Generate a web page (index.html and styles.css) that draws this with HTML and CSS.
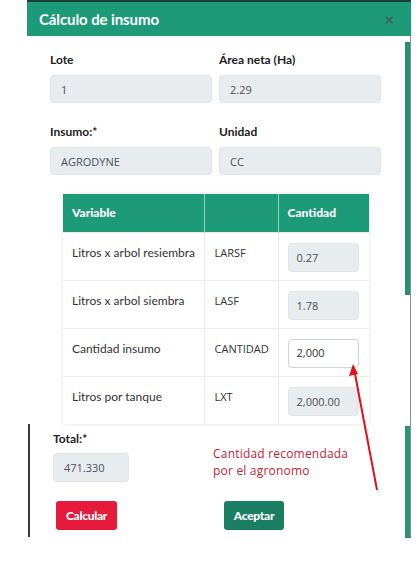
FILE: index.html
```html
<!DOCTYPE html>
<html lang="es">
<head>
<meta charset="utf-8">
<title>Cálculo de insumo</title>
<link rel="stylesheet" href="styles.css">
</head>
<body>
<div class="screen">
  <div class="frame">
    <div class="header">
      <span class="title">Cálculo de insumo</span>
      <span class="close">×</span>
    </div>
    <div class="content">
      <div class="main">
        <div class="form">
          <div class="grid2">
            <div class="field">
              <div class="label">Lote</div>
              <div class="input ro">1</div>
            </div>
            <div class="field">
              <div class="label">Área neta (Ha)</div>
              <div class="input ro">2.29</div>
            </div>
            <div class="field">
              <div class="label">Insumo:*</div>
              <div class="input ro">AGRODYNE</div>
            </div>
            <div class="field">
              <div class="label">Unidad</div>
              <div class="input ro">CC</div>
            </div>
          </div>
          <div class="table-wrap">
            <table class="vars">
              <thead>
                <tr><th class="c1">Variable</th><th class="c2"></th><th class="c3">Cantidad</th></tr>
              </thead>
              <tbody>
                <tr><td class="c1">Litros x arbol resiembra</td><td class="c2">LARSF</td><td class="c3"><div class="cell-input ro">0.27</div></td></tr>
                <tr><td class="c1">Litros x arbol siembra</td><td class="c2">LASF</td><td class="c3"><div class="cell-input ro">1.78</div></td></tr>
                <tr><td class="c1">Cantidad insumo</td><td class="c2">CANTIDAD</td><td class="c3"><div class="cell-input edit">2,000</div></td></tr>
                <tr><td class="c1">Litros por tanque</td><td class="c2">LXT</td><td class="c3"><div class="cell-input ro">2,000.00</div></td></tr>
              </tbody>
            </table>
          </div>
        </div>
        <div class="footer">
          <div class="total">
            <div class="label">Total:*</div>
            <div class="input ro small">471.330</div>
          </div>
          <div class="note">Cantidad recomendada<br>por el agronomo</div>
          <div class="btn-cell"><span class="btn red">Calcular</span></div>
          <div class="btn-cell right"><span class="btn green">Aceptar</span></div>
        </div>
      </div>
      <div class="rail">
        <div class="rail-gap"></div>
        <div class="rail-green top"></div>
        <div class="rail-grey"></div>
        <div class="rail-green bottom"></div>
      </div>
    </div>
  </div>
  <svg class="arrow" width="419" height="563" viewBox="0 0 419 563">
    <line x1="377" y1="490" x2="355" y2="374" stroke="#e2101d" stroke-width="2"/>
    <polygon points="353,364 349,376 358,374" fill="#e2101d"/>
  </svg>
</div>
</body>
</html>
```

FILE: styles.css
```css
* { box-sizing: border-box; }
html, body { margin: 0; padding: 0; background: #fff; }
body { font-family: Lato, "Noto Sans", sans-serif; color: #212529; }

.screen {
  position: relative;
  width: 419px;
  height: 563px;
  overflow: hidden;
  background: #fff;
}

.frame {
  margin-left: 27px;
  width: 384px;
}

.header {
  height: 36px;
  border-top: 2px solid #173f34;
  background: #1d9a77;
  display: flex;
  align-items: center;
  justify-content: space-between;
  padding: 0 16px 0 12px;
}
.title {
  color: #fff;
  font-weight: 700;
  font-size: 15px;
  letter-spacing: -0.1px;
}
.close {
  color: #4a5a55;
  font-family: "DejaVu Sans", sans-serif;
  font-size: 13px;
  font-weight: 700;
}

.content {
  display: flex;
  border-right: 1px solid #8d8d8d;
}
.main {
  width: 378px;
}

.form {
  padding: 16px 0 0 23px;
}
.grid2 {
  display: grid;
  grid-template-columns: 162px 162px;
  column-gap: 7px;
  row-gap: 21px;
}
.label {
  font-size: 12px;
  line-height: 16px;
  font-weight: 700;
  color: #222;
  margin-bottom: 7px;
}
.input {
  height: 28px;
  border-radius: 4px;
  display: flex;
  align-items: center;
  padding-left: 10px;
  font-family: "Open Sans", sans-serif;
  font-size: 11px;
  color: #495057;
}
.ro {
  background: #e9ecef;
  border: 1px solid #e1e4e8;
}

.table-wrap {
  margin: 19px 0 0 13px;
  width: 306px;
  box-shadow: 0 0 4px rgba(0, 0, 0, 0.12);
}
.vars {
  width: 306px;
  border-collapse: collapse;
  table-layout: fixed;
}
.vars .c1 { width: 141px; }
.vars .c2 { width: 74px; }
.vars .c3 { width: 91px; }
.vars th {
  height: 38px;
  background: #1d9a77;
  color: #fff;
  font-size: 12px;
  font-weight: 900;
  text-align: left;
  padding: 0 0 0 9px;
  border-left: 1px solid #8fd3c0;
}
.vars th:first-child { border-left: none; }
.vars td {
  height: 48px;
  vertical-align: top;
  font-size: 12px;
  line-height: 16px;
  color: #333;
  padding: 12px 0 0 9px;
  border-top: 1px solid #ececec;
  border-left: 1px solid #ececec;
}
.vars td:first-child { border-left: none; }
.vars td.c2 {
  font-family: "Open Sans", sans-serif;
  font-size: 11px;
  padding-left: 10px;
}
.vars td.c3 {
  padding: 10px 0 0 9px;
}
.cell-input {
  width: 71px;
  height: 29px;
  border-radius: 4px;
  display: flex;
  align-items: center;
  padding-left: 8px;
  font-family: "Open Sans", sans-serif;
  font-size: 11px;
  color: #495057;
}
.cell-input.ro { padding-top: 2px; }
.cell-input.edit {
  background: #fff;
  border: 1px solid #ced4da;
  color: #333;
}

.footer {
  border-left: 2px solid #3b3b3b;
  margin-left: 1px;
  padding: 7px 0 7px 23px;
  display: grid;
  grid-template-columns: 160px 1fr;
  row-gap: 19px;
}
.total .label { margin-bottom: 6px; }
.input.small {
  width: 76px;
  height: 29px;
}
.note {
  padding-top: 14px;
  font-family: "Open Sans", sans-serif;
  font-size: 12px;
  line-height: 17px;
  color: #c81d36;
  letter-spacing: 0.2px;
}
.btn-cell { padding-left: 3px; }
.btn-cell.right { padding-left: 11px; }
.btn {
  display: inline-flex;
  align-items: center;
  justify-content: center;
  height: 29px;
  border-radius: 3px;
  color: #fff;
  font-size: 12px;
  font-weight: 900;
  letter-spacing: -0.3px;
}
.btn.red { width: 61px; background: #e61a3b; }
.btn.green { width: 60px; background: #1a7f62; }

.rail {
  width: 5px;
  display: flex;
  flex-direction: column;
}
.rail-gap { height: 6px; }
.rail-green { background: #27906d; }
.rail-green.top { height: 253px; }
.rail-grey { height: 131px; }
.rail-green.bottom { height: 112px; background: #2a9472; }

.arrow {
  position: absolute;
  left: 0;
  top: 0;
  pointer-events: none;
}
```
